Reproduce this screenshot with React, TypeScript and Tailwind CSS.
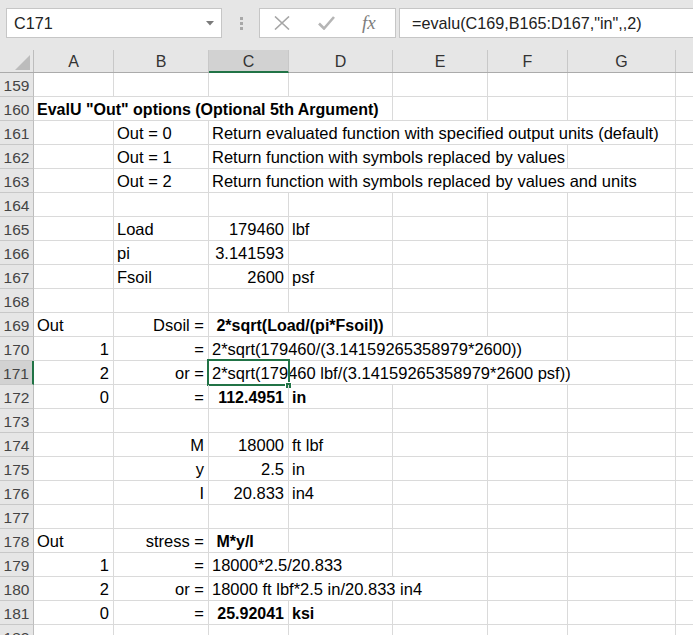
import React from 'react';

type Cell = { c: number; span?: number; text: string; right?: boolean; bold?: boolean };

// column widths incl. right gridline: A..G, H fills the rest
const COLS = [80, 95, 80, 104, 95, 80, 108];
const LETTERS = ['A', 'B', 'C', 'D', 'E', 'F', 'G', ''];

const ROWS: { n: number; cells: Cell[] }[] = [
    { n: 159, cells: [] },
    { n: 160, cells: [{ c: 0, span: 4, text: 'EvalU "Out" options (Optional 5th Argument)', bold: true }] },
    { n: 161, cells: [{ c: 1, text: 'Out = 0' }, { c: 2, span: 5, text: 'Return evaluated function with specified output units (default)' }] },
    { n: 162, cells: [{ c: 1, text: 'Out = 1' }, { c: 2, span: 4, text: 'Return function with symbols replaced by values' }] },
    { n: 163, cells: [{ c: 1, text: 'Out = 2' }, { c: 2, span: 5, text: 'Return function with symbols replaced by values and units' }] },
    { n: 164, cells: [] },
    { n: 165, cells: [{ c: 1, text: 'Load' }, { c: 2, text: '179460', right: true }, { c: 3, text: 'lbf' }] },
    { n: 166, cells: [{ c: 1, text: 'pi' }, { c: 2, text: '3.141593', right: true }] },
    { n: 167, cells: [{ c: 1, text: 'Fsoil' }, { c: 2, text: '2600', right: true }, { c: 3, text: 'psf' }] },
    { n: 168, cells: [] },
    { n: 169, cells: [{ c: 0, text: 'Out' }, { c: 1, text: 'Dsoil =', right: true }, { c: 2, span: 2, text: ' 2*sqrt(Load/(pi*Fsoil))', bold: true }] },
    { n: 170, cells: [{ c: 0, text: '1', right: true }, { c: 1, text: '=', right: true }, { c: 2, span: 4, text: '2*sqrt(179460/(3.14159265358979*2600))' }] },
    { n: 171, cells: [{ c: 0, text: '2', right: true }, { c: 1, text: 'or =', right: true }, { c: 2, span: 5, text: '2*sqrt(179460 lbf/(3.14159265358979*2600 psf))' }] },
    { n: 172, cells: [{ c: 0, text: '0', right: true }, { c: 1, text: '=', right: true }, { c: 2, text: '112.4951', right: true, bold: true }, { c: 3, text: 'in', bold: true }] },
    { n: 173, cells: [] },
    { n: 174, cells: [{ c: 1, text: 'M', right: true }, { c: 2, text: '18000', right: true }, { c: 3, text: 'ft lbf' }] },
    { n: 175, cells: [{ c: 1, text: 'y', right: true }, { c: 2, text: '2.5', right: true }, { c: 3, text: 'in' }] },
    { n: 176, cells: [{ c: 1, text: 'I', right: true }, { c: 2, text: '20.833', right: true }, { c: 3, text: 'in4' }] },
    { n: 177, cells: [] },
    { n: 178, cells: [{ c: 0, text: 'Out' }, { c: 1, text: 'stress =', right: true }, { c: 2, text: ' M*y/I', bold: true }] },
    { n: 179, cells: [{ c: 0, text: '1', right: true }, { c: 1, text: '=', right: true }, { c: 2, span: 2, text: '18000*2.5/20.833' }] },
    { n: 180, cells: [{ c: 0, text: '2', right: true }, { c: 1, text: 'or =', right: true }, { c: 2, span: 3, text: '18000 ft lbf*2.5 in/20.833 in4' }] },
    { n: 181, cells: [{ c: 0, text: '0', right: true }, { c: 1, text: '=', right: true }, { c: 2, text: '25.92041', right: true, bold: true }, { c: 3, text: 'ksi', bold: true }] },
    { n: 182, cells: [] },
];

const SEL_ROW = 171;
const SEL_COL = 2;

const SheetRow: React.FC<{ n: number; cells: Cell[] }> = ({ n, cells }) => {
    const out: React.ReactNode[] = [];
    let col = 0;
    while (col < COLS.length) {
        const cell = cells.find(x => x.c === col);
        const span = cell?.span ?? 1;
        const width = COLS.slice(col, col + span).reduce((a, b) => a + b, 0);
        out.push(
            <div
                key={col}
                style={{ width }}
                className={`h-full shrink-0 border-r border-[#dadada] flex items-center pt-[2px] whitespace-pre ${cell?.right ? 'justify-end pr-[4px]' : 'pl-[3px]'} ${cell?.bold ? 'font-bold text-[16px]' : 'text-[16.5px]'}`}
            >
                {cell?.text}
            </div>
        );
        col += span;
    }
    const selected = n === SEL_ROW;
    return (
        <div className="relative flex h-[24px] border-b border-[#dadada]">
            <div className={`w-[34px] shrink-0 h-[24px] -mb-px flex items-center justify-center pt-[2px] text-[#444] border-b border-[#c8c8c8] ${selected ? 'bg-[#d2d2d2] border-r-2 border-r-[#217346]' : 'bg-[#e6e6e6] border-r border-r-[#bdbdbd]'}`}>
                {n}
            </div>
            {out}
            <div className="flex-1" />
            {selected && (
                <>
                    <div className="absolute left-[207px] top-[-2px] w-[83px] h-[27px] border-2 border-[#217346]" />
                    <div className="absolute left-[285px] top-[21px] w-[7px] h-[7px] bg-[#217346] border border-white" />
                </>
            )}
        </div>
    );
};

const App: React.FC = () => {
    return (
        <div className="w-[693px] h-[635px] overflow-hidden bg-white text-black text-[15.5px] leading-none font-['Liberation_Sans',Arial,sans-serif]">
            {/* formula bar */}
            <div className="h-[50px] bg-[#e6e6e6] flex items-start pt-[8px] pl-[6px] text-[16.2px]">
                <div className="w-[216px] h-[30px] bg-white border border-[#c6c6c6] flex items-center justify-between pl-[7px] pr-[7px] text-[#222]">
                    <span className="pt-[1px]">C171</span>
                    <svg width="8" height="5" viewBox="0 0 8 5"><path d="M0 0h8L4 4.5z" fill="#7a7a7a" /></svg>
                </div>
                <div className="ml-[18px] mt-[9px] flex flex-col gap-[2px]">
                    <div className="w-[3px] h-[3px] bg-[#a8a8a8]" />
                    <div className="w-[3px] h-[3px] bg-[#a8a8a8]" />
                    <div className="w-[3px] h-[3px] bg-[#a8a8a8]" />
                </div>
                <div className="ml-[16px] w-[137px] h-[30px] bg-white border border-[#c6c6c6] flex items-center pl-[14px]">
                    <svg width="16" height="14" viewBox="0 0 16 14">
                        <path d="M1 0.5L15 13.5M15 0.5L1 13.5" stroke="#a6a6a6" strokeWidth="1.6" fill="none" />
                    </svg>
                    <svg className="ml-[28px]" width="17" height="14" viewBox="0 0 17 14">
                        <path d="M1 7.5L6 12.5L16 1" stroke="#b5b5b5" strokeWidth="2.6" fill="none" />
                    </svg>
                    <span className="ml-[27px] text-[19px] italic text-[#7d7d7d] font-['Liberation_Serif',serif] -mt-[2px]">fx</span>
                </div>
                <div className="ml-[3px] flex-1 h-[30px] bg-white border border-r-0 border-[#c6c6c6] flex items-center pl-[12px] text-[#222]">
                    <span className="pt-[1px]">=evalu(C169,B165:D167,"in",,2)</span>
                </div>
            </div>

            {/* column headers */}
            <div className="flex h-[23px] bg-[#e6e6e6] border-b border-[#ababab] text-[#333] text-[16px]">
                <div className="w-[34px] shrink-0 border-r border-[#bdbdbd] relative">
                    <svg className="absolute left-[15px] top-[5px]" width="15" height="15" viewBox="0 0 15 15"><path d="M15 0V15H0z" fill="#bcbcbc" /></svg>
                </div>
                {COLS.map((w, i) => (
                    <div
                        key={i}
                        style={{ width: w }}
                        className={`shrink-0 border-r border-[#c8c8c8] flex items-center justify-center pt-[2px] ${i === SEL_COL ? 'bg-[#d2d2d2] border-b-2 border-b-[#217346] -mb-px' : ''}`}
                    >
                        {LETTERS[i]}
                    </div>
                ))}
                <div className="flex-1" />
            </div>

            {ROWS.map(r => <SheetRow key={r.n} n={r.n} cells={r.cells} />)}
        </div>
    );
};

export default App;
